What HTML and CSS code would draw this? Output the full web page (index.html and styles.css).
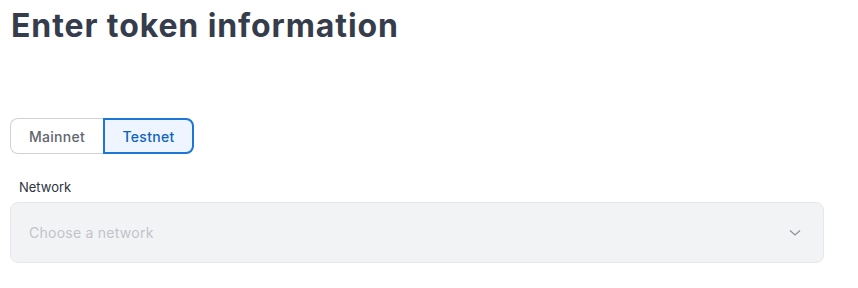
FILE: index.html
```html
<!DOCTYPE html>
<html>
<head>
<meta charset="utf-8">
<link rel="stylesheet" href="styles.css">
</head>
<body>
<main class="page">
  <h1 class="title">Enter token information</h1>
  <div class="toggle">
    <button class="seg seg-left">Mainnet</button>
    <button class="seg seg-right active">Testnet</button>
  </div>
  <label class="label">Network</label>
  <div class="select">
    <span class="placeholder">Choose a network</span>
    <svg class="chev" width="12" height="8" viewBox="0 0 12 8"><path d="M1 1.5 L6 6 L11 1.5" fill="none" stroke="#8d949c" stroke-width="1.3"/></svg>
  </div>
</main>
</body>
</html>
```
FILE: styles.css
```css
* { box-sizing: border-box; }
html, body { margin: 0; padding: 0; background: #fff; }
body { font-family: Inter, "Noto Sans", sans-serif; }
.page { padding: 0 34px 0 10px; display: flex; flex-direction: column; align-items: flex-start; }
.title { margin: 6px 0 0 1px; font-size: 32px; line-height: 40px; font-weight: 700; color: #353d4c; letter-spacing: 0.9px; }
.toggle { display: flex; margin-top: 72px; }
.seg { height: 36px; font-family: inherit; font-size: 14px; font-weight: 500; padding: 0; cursor: pointer; letter-spacing: 0.3px; }
.seg-left { width: 93px; border: 1px solid #cfd3d8; border-right: none; border-radius: 8px 0 0 8px; background: #fff; color: #5f6670; }
.seg-right { width: 91px; border: 2px solid #1b76d6; border-radius: 0 8px 8px 0; background: #eef5fe; color: #1063bd; }
.label { margin: 25px 0 0 9px; font-size: 13px; line-height: 16px; color: #2c3440; }
.select { align-self: stretch; margin-top: 7px; height: 61px; background: #f2f3f4; border: 1px solid #e5e7ea; border-radius: 8px; display: flex; align-items: center; justify-content: space-between; padding: 0 22px 0 18px; }
.placeholder { font-size: 14px; color: #c0c4ca; letter-spacing: 0.25px; }
.chev { display: block; }
```
